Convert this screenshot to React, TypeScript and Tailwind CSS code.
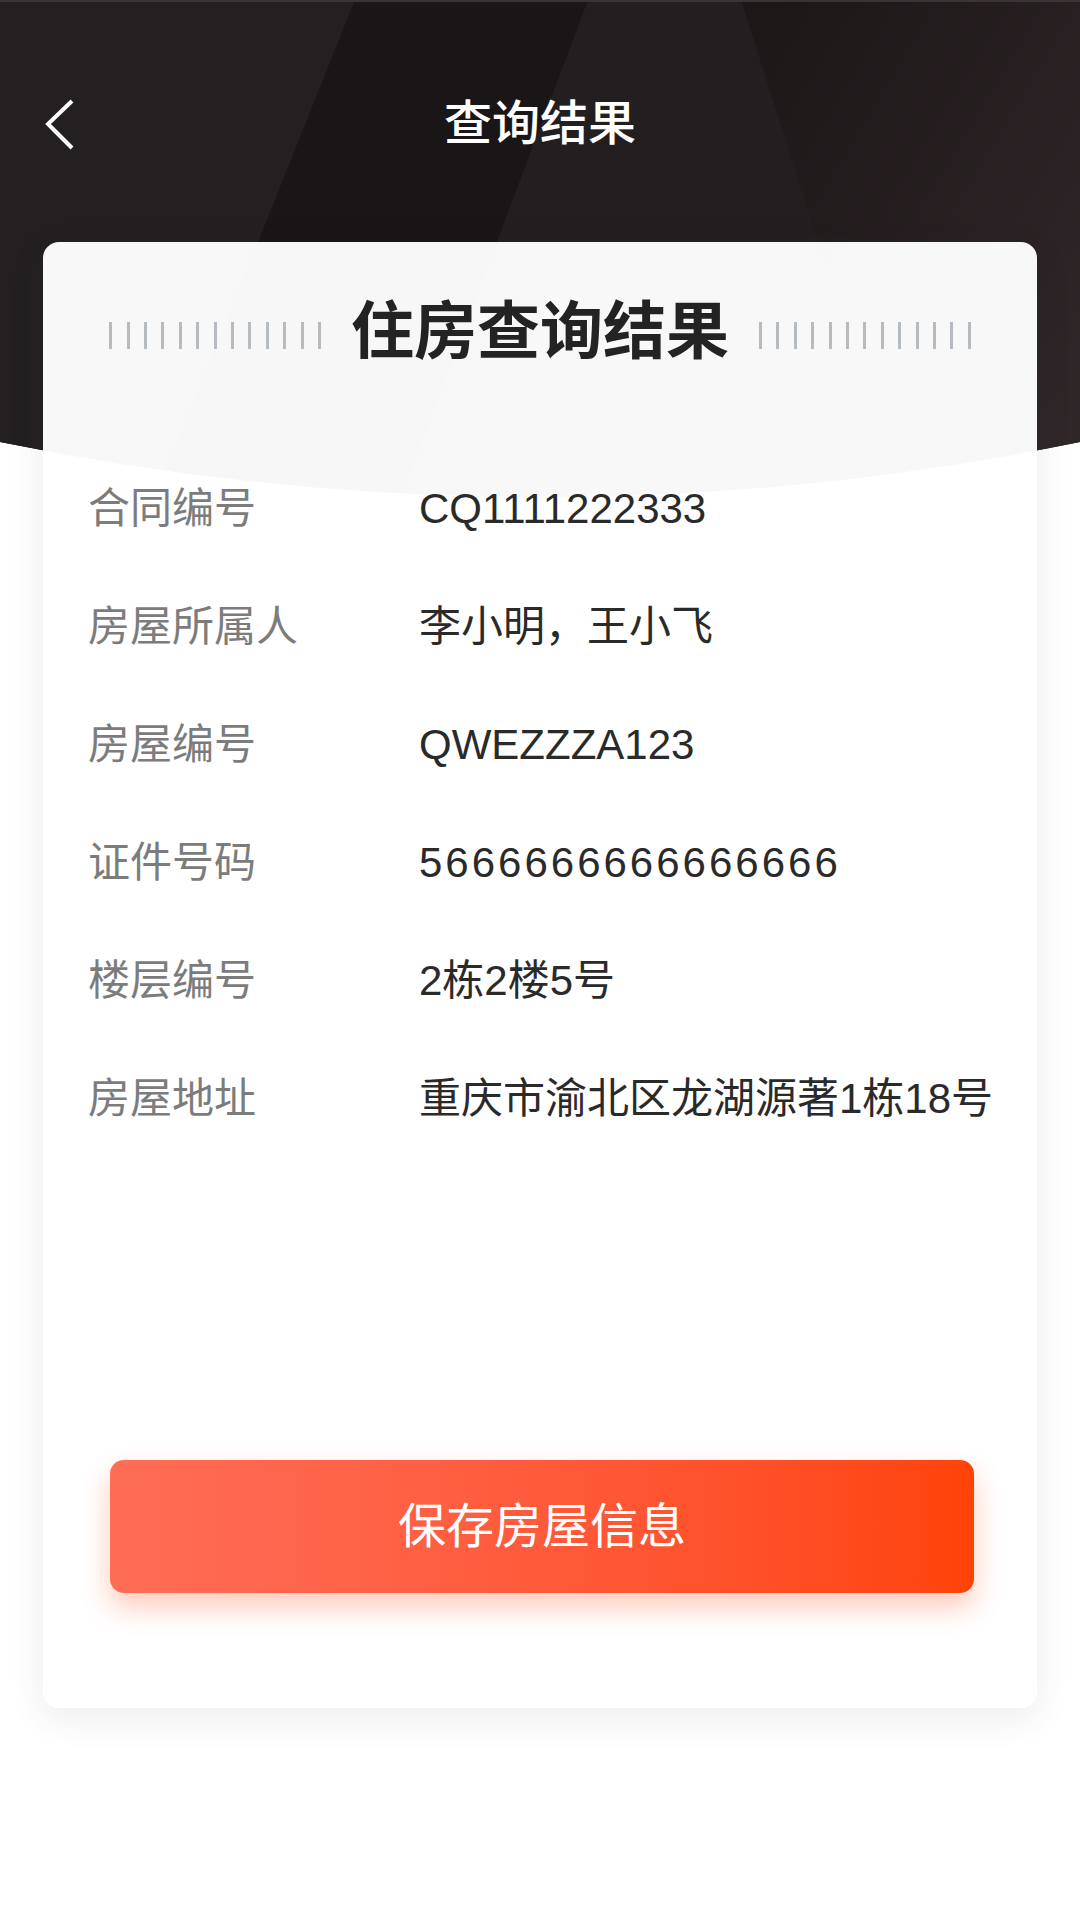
import React from "react";

const rows = [
  { label: "合同编号", value: "CQ1111222333", wide: false },
  { label: "房屋所属人", value: "李小明，王小飞", wide: false },
  { label: "房屋编号", value: "QWEZZZA123", wide: false },
  { label: "证件号码", value: "5666666666666666", wide: true },
  { label: "楼层编号", value: "2栋2楼5号", wide: false },
  { label: "房屋地址", value: "重庆市渝北区龙湖源著1栋18号", wide: false },
];

const HeaderBackdrop = () => (
  <svg
    className="absolute left-0 top-0 w-[1080px] h-[560px]"
    viewBox="0 0 1080 560"
    preserveAspectRatio="none"
  >
    <defs>
      <clipPath id="hdr">
        <path d="M0 0H1080V442Q540 552 0 442Z" />
      </clipPath>
      <linearGradient id="rightBand" x1="0" y1="0" x2="1" y2="1">
        <stop offset="0" stopColor="#1c1617" />
        <stop offset="1" stopColor="#32292b" />
      </linearGradient>
    </defs>
    <g clipPath="url(#hdr)">
      <rect x="0" y="0" width="1080" height="560" fill="#1f1a1b" />
      <polygon points="0,0 355,0 131,560 0,560" fill="#242021" />
      <polygon points="355,0 588,0 377,560 131,560" fill="#1a1516" />
      <polygon points="588,0 741,0 920,560 377,560" fill="#231f20" />
      <polygon points="741,0 1080,0 1080,560 920,560" fill="url(#rightBand)" />
      <rect x="0" y="0" width="1080" height="2" fill="#3a3435" />
    </g>
  </svg>
);

const Ticks = () => (
  <div className="flex items-center gap-[14.4px] mt-[8px]">
    {Array.from({ length: 13 }).map((_, i) => (
      <span key={i} className="block w-[3px] h-[27px] bg-[#b6bbc1]" />
    ))}
  </div>
);

export default function App() {
  return (
    <div className="relative min-h-[1920px] w-[1080px] bg-white overflow-hidden font-['Liberation_Sans','Noto_Sans_CJK_SC',sans-serif]">
      <HeaderBackdrop />

      <div className="relative">
        {/* Nav */}
        <div className="h-[242px] pt-[88px] px-[44px] grid grid-cols-[1fr_auto_1fr]">
          <div className="pt-[10px]">
            <svg width="32" height="52" viewBox="0 0 32 52" fill="none">
              <polyline
                points="28,3 4,26 28,50"
                stroke="#ffffff"
                strokeWidth="4"
                strokeLinejoin="miter"
              />
            </svg>
          </div>
          <h1 className="text-white text-[48px] leading-[72px] font-medium">
            查询结果
          </h1>
          <div />
        </div>

        {/* Card */}
        <div className="mx-[43px] rounded-[16px] bg-[rgba(255,255,255,0.97)] shadow-[0_10px_36px_rgba(40,50,80,0.09)] pt-[49px] pb-[115px]">
          <div className="h-[80px] flex items-center justify-center gap-[30px]">
            <Ticks />
            <h2 className="text-[63px] leading-[80px] font-bold text-[#232323]">
              住房查询结果
            </h2>
            <Ticks />
          </div>

          <div className="mt-[78px] px-[45px]">
            {rows.map((r) => (
              <div key={r.label} className="h-[118px] flex items-center">
                <span className="w-[331px] shrink-0 text-[42px] text-[#7c7c7c]">
                  {r.label}
                </span>
                <span
                  className={
                    r.wide
                      ? "text-[42px] text-[#2a2a2a] whitespace-nowrap tracking-[3px]"
                      : "text-[42px] text-[#2a2a2a] whitespace-nowrap"
                  }
                >
                  {r.value}
                </span>
              </div>
            ))}
          </div>

          <div className="mt-[303px] pl-[67px] pr-[63px]">
            <button className="w-full h-[133px] rounded-[14px] bg-gradient-to-r from-[#ff6d57] to-[#ff4306] shadow-[0_14px_28px_rgba(255,90,40,0.32)] text-white text-[48px]">
              保存房屋信息
            </button>
          </div>
        </div>
      </div>
    </div>
  );
}
